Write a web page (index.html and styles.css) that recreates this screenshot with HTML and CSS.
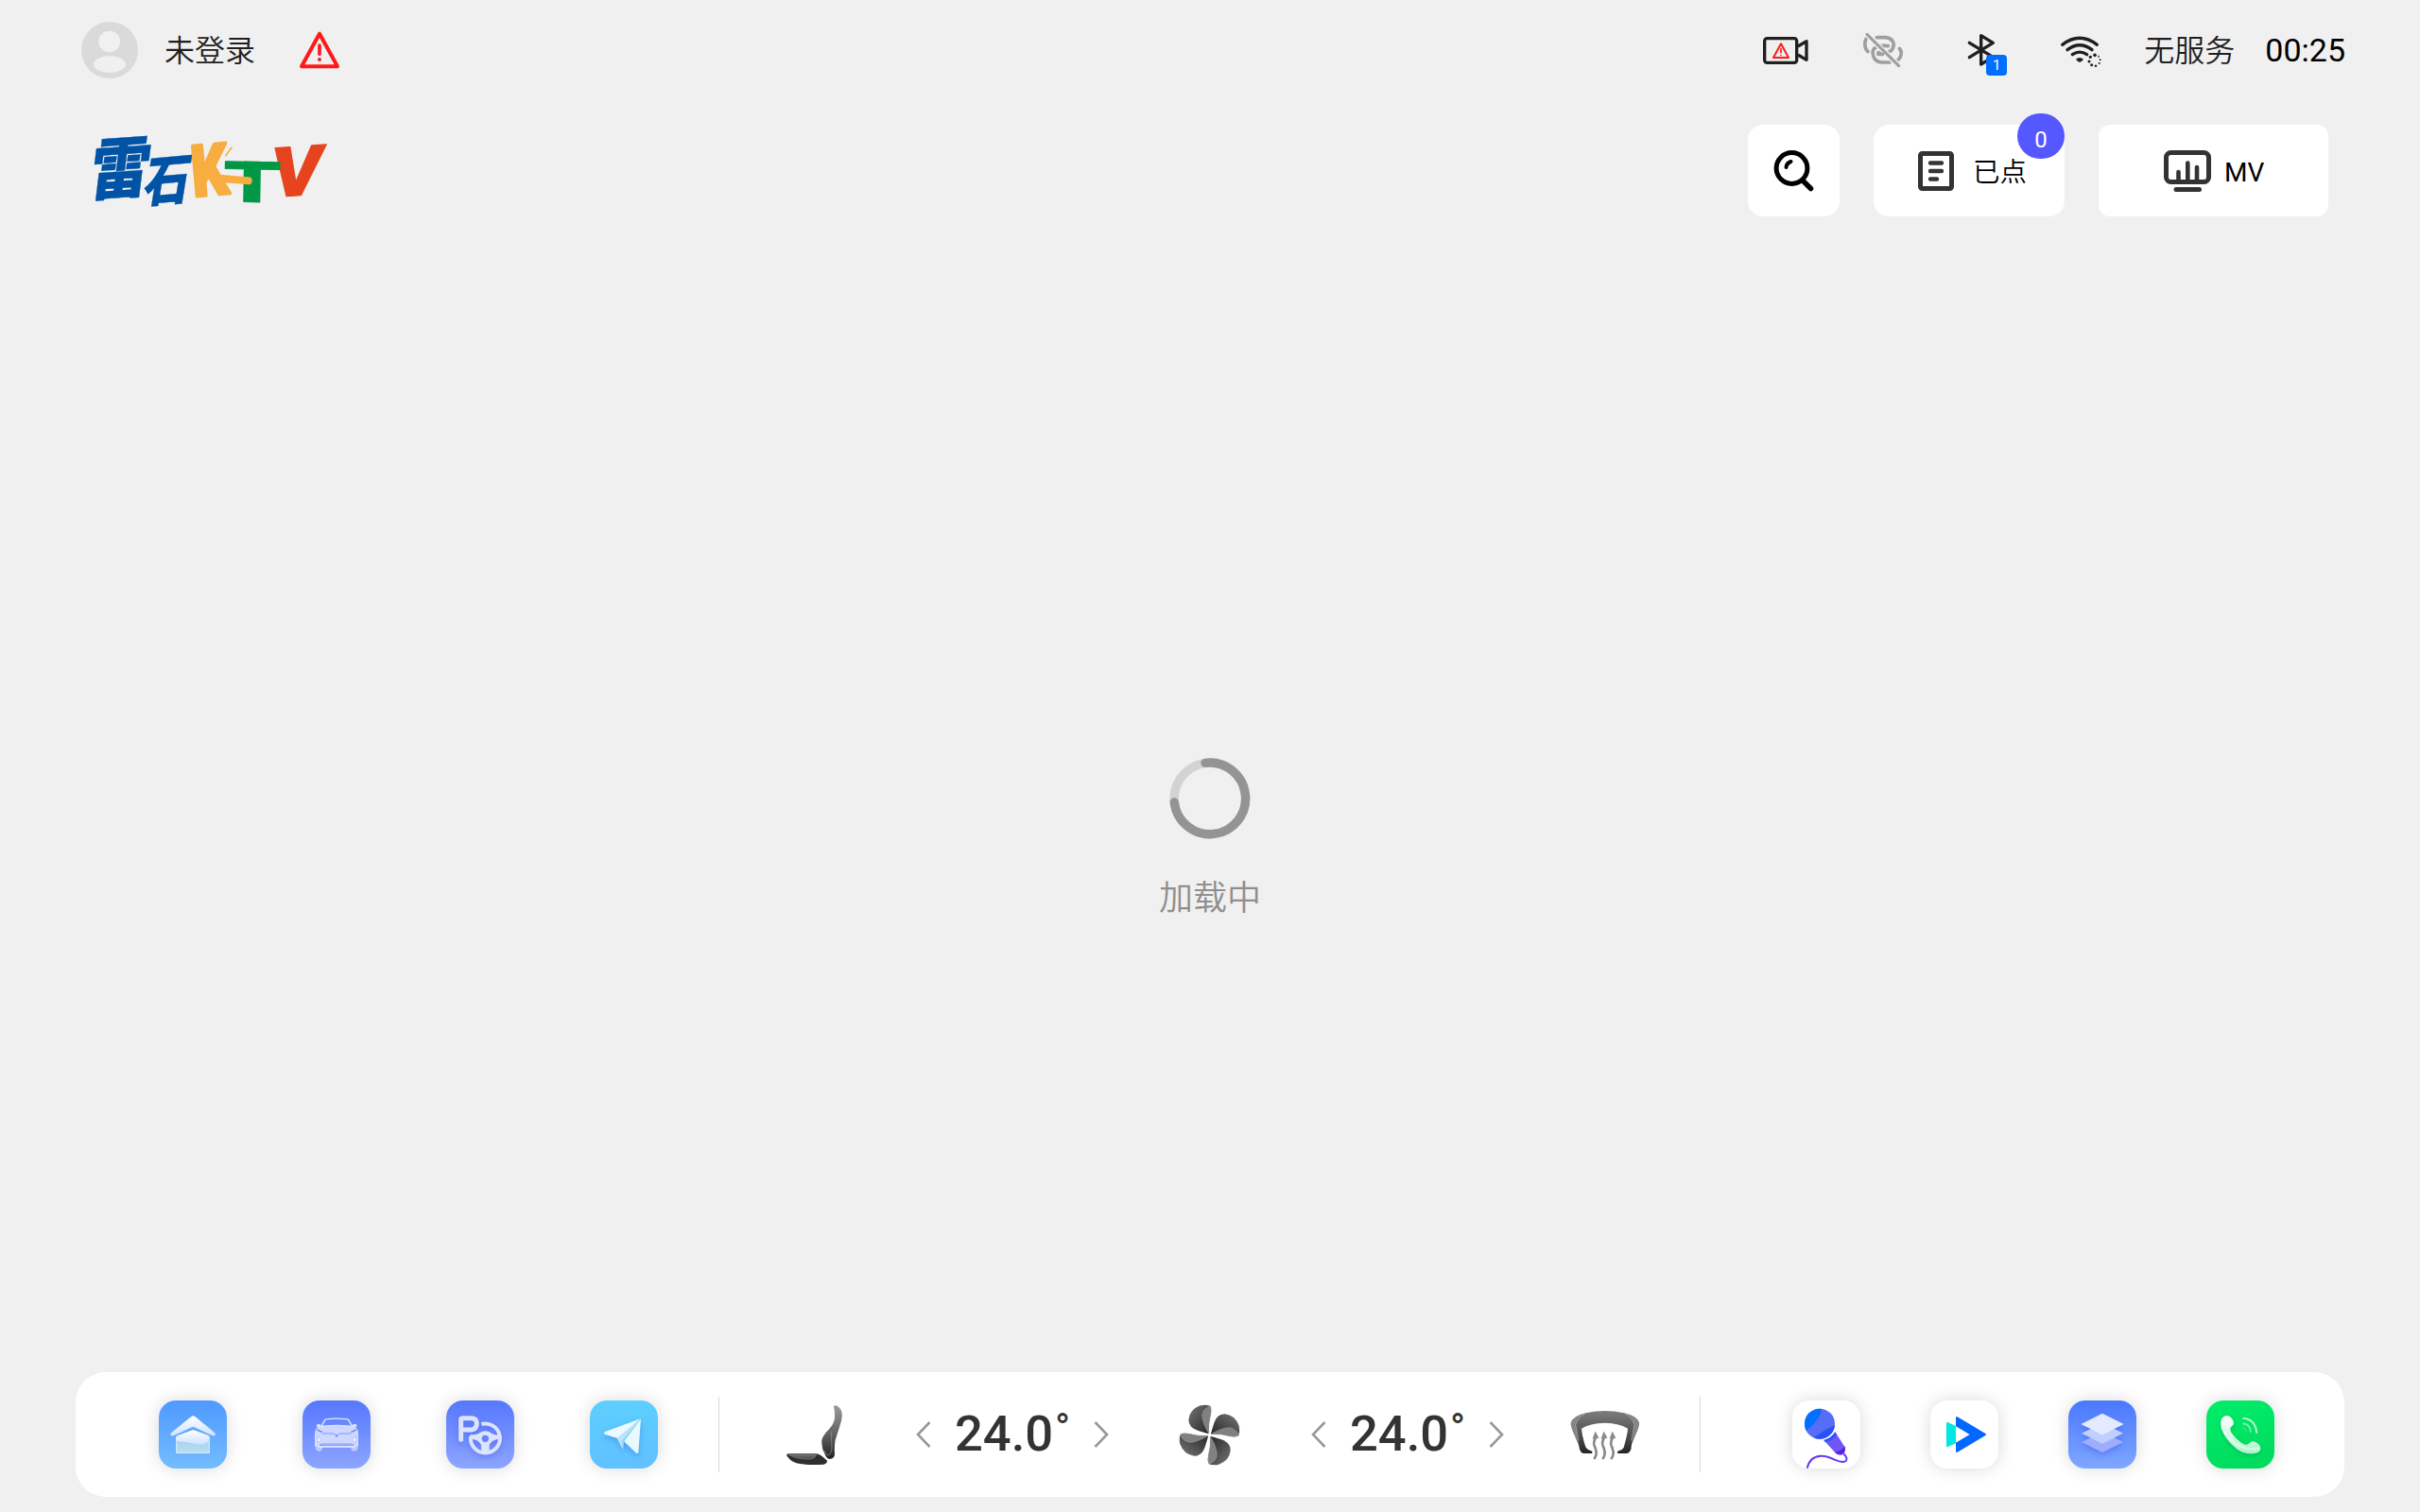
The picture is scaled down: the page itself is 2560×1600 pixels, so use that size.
FILE: index.html
```html
<!DOCTYPE html>
<html lang="zh-CN">
<head>
<meta charset="utf-8">
<title>雷石KTV</title>
<link rel="stylesheet" href="styles.css">
</head>
<body>
<div class="screen">
  <header class="status">
    <div class="account">
      <svg class="avatar" viewBox="78 69 180 180">
        <circle cx="168" cy="159" r="90" fill="#dadada"/>
        <circle cx="167" cy="132" r="34" fill="#f0f0f0"/>
        <ellipse cx="168" cy="204" rx="51" ry="27" fill="#f0f0f0"/>
      </svg>
      <span class="account-name">未登录</span>
      <svg class="alert" viewBox="768 96 132 126" fill="none" stroke="#ff1a1a" stroke-linecap="round" stroke-linejoin="round">
        <path d="M834 107 777 211H891Z" stroke-width="12"/>
        <path d="M834 144V172" stroke-width="11"/>
        <circle cx="834" cy="189" r="6" fill="#ff1a1a" stroke="none"/>
      </svg>
    </div>
    <div class="indicators">
      <svg class="indicator" viewBox="-12 39 312 180" fill="none" stroke="#1f1f1f" stroke-width="10" stroke-linejoin="round">
        <rect x="80" y="92" width="102" height="77" rx="8"/>
        <path d="M186 117 213 101V160L186 144"/>
        <g stroke="#ff1a1a"><path d="M132 109 108 153H156Z" stroke-width="6"/><path d="M132 123V139M132 143V147" stroke-width="5"/></g>
      </svg>
      <svg class="indicator" viewBox="300 39 312 180" fill="none" stroke="#9f9f9f" stroke-width="11" stroke-linecap="round">
        <path d="M403 92Q397 101 399 115Q400 127 408 134"/>
        <path d="M436 89H464Q489 92 490 112Q487 135 466 137H441" />
        <path d="M459 115H448Q424 119 423 136Q424 165 451 168H477"/>
        <path d="M508 124Q516 132 513 145Q511 154 503 161"/>
        <path d="M405 79 507 180" stroke="#f0f0f0" stroke-width="18" stroke-linecap="butt"/>
        <path d="M405 79 506 179" stroke-width="9"/>
        <path d="M460 115 472 116M440 142 455 142"/>
      </svg>
      <span class="indicator bluetooth">
        <svg class="indicator" viewBox="612 39 312 180" fill="none" stroke="#1f1f1f" stroke-width="10" stroke-linecap="round" stroke-linejoin="round">
          <path d="M730 106 805 151 767 174V83L805 106 730 152"/>
        </svg>
        <span class="device-count">1</span>
      </span>
      <svg class="indicator" viewBox="924 39 312 180" fill="none" stroke="#1f1f1f" stroke-width="10" stroke-linecap="round">
        <path d="M1025 112Q1080 70 1135 112"/>
        <path d="M1041 128Q1080 98 1119 128"/>
        <path d="M1057 143Q1080 128 1103 143"/>
        <path d="M1068 158Q1080 148 1092 158Q1089 163 1080 168Q1071 163 1068 158Z" fill="#1f1f1f" stroke="none"/>
        <g fill="#1f1f1f" stroke="none">
          <circle cx="1128" cy="145" r="5.5"/><circle cx="1114" cy="151" r="5"/><circle cx="1110" cy="165" r="4.5"/>
          <circle cx="1118" cy="176" r="4.5"/><circle cx="1131" cy="179" r="3.8"/><circle cx="1142" cy="171" r="3"/>
          <circle cx="1145" cy="160" r="3"/><circle cx="1140" cy="149" r="2.6"/>
        </g>
      </svg>
      <span class="carrier">无服务</span>
      <time class="clock">00:25</time>
    </div>
  </header>

  <section class="toolbar">
    <svg class="logo" viewBox="48 360 888 366" font-weight="900" stroke-linejoin="round" stroke-linecap="round">
      <g class="logo-han" fill="#0053a5" stroke="#0053a5" stroke-width="1">
        <text transform="translate(98 620) rotate(-4) skewX(-11) scale(.96 1.06)" font-size="200">雷</text>
        <text transform="translate(270 642) rotate(-5) skewX(-14) scale(.85 1)" font-size="172">石</text>
      </g>
      <g class="logo-latin">
        <text transform="translate(672 627) rotate(-4) skewX(-12) scale(1.12 1)" font-size="218" fill="#e6441f" stroke="#e6441f" stroke-width="4">V</text>
        <text transform="translate(434 624) rotate(-5) scale(.8 1)" font-size="226" fill="#f7ad40" stroke="#f7ad40" stroke-width="10">K</text>
        <text transform="translate(529 640) rotate(1) scale(1.6 1)" font-size="180" fill="#009844" stroke="#009844" stroke-width="3">T</text>
        <path d="M516 566 608 574" fill="none" stroke="#f7ad40" stroke-width="24"/>
        <path d="M536 494 555 469" fill="none" stroke="#f7ad40" stroke-width="5"/>
      </g>
    </svg>
    <div class="actions">
      <button class="btn btn-search" aria-label="搜索">
        <svg width="44" height="56" viewBox="0 0 44 56" fill="none" stroke="#000" stroke-linecap="round">
          <circle cx="20.5" cy="26" r="16.4" stroke-width="5"/>
          <path d="M33 40 40.500 47.500" stroke-width="5.5"/>
          <path d="M14.500 25Q15 20.500 19.500 19" stroke-width="4"/>
        </svg>
      </button>
      <button class="btn btn-queue">
        <svg width="38" height="42" viewBox="0 0 38 42" fill="none" stroke="#333" stroke-width="5" stroke-linejoin="round" stroke-linecap="round">
          <rect x="2.5" y="2.5" width="33" height="37" rx="2"/>
          <path d="M13 12.500H25M13 21H25M13 29.500H20" stroke-width="4.4"/>
        </svg>
        <span class="label label-queue">已点</span>
        <span class="queue-count">0</span>
      </button>
      <button class="btn btn-mv">
        <svg width="50" height="44" viewBox="0 0 50 44" fill="none" stroke="#333" stroke-width="5" stroke-linecap="round">
          <rect x="2.5" y="2.5" width="45" height="31" rx="5"/>
          <path d="M13 41.500H37.500"/>
          <path d="M15.500 33V23M25.300 33V13.500M35 33V18" stroke-width="4.6"/>
        </svg>
        <span class="label">MV</span>
      </button>
    </div>
  </section>

  <main class="loading">
    <svg width="88" height="88" viewBox="0 0 88 88" fill="none" stroke-width="9.4" stroke-linecap="round">
      <circle cx="44" cy="44" r="37.8" stroke="#d3d3d3"/>
      <path d="M39 6.400A37.800 37.800 0 1 1 6.200 48" stroke="#949494"/>
    </svg>
    <p class="loading-text">加载中</p>
  </main>

  <nav class="dock">
    <div class="apps apps-left">
      <svg class="app app-home" viewBox="294 126 216 216">
        <defs>
          <linearGradient id="roof" x2="0" y2="1"><stop stop-color="#fff"/><stop offset="1" stop-color="#cfe1ff"/></linearGradient>
          <linearGradient id="wall" x2="0" y2="1"><stop stop-color="#98c9ee"/><stop offset="1" stop-color="#b9dff3"/></linearGradient>
        </defs>
        <path d="M397 177Q403 173 409 177L471 228Q476 233 472 237Q468 239 463 237L410 212Q403 208 396 212L342 237Q336 239 332 237Q328 233 334 228Z" fill="url(#roof)"/>
        <path d="M348 242 403 220 456 242V294H348Z" fill="url(#wall)"/>
        <path d="M348 242Q350 237 356 236L397 221Q403 218 409 221L450 236Q456 239 456 246Q449 270 414 265Q380 256 348 255Z" fill="url(#roof)"/>
        <path d="M350 258V292H454V252" fill="none" stroke="#d5eef8" stroke-width="3"/>
      </svg>
      <svg class="app app-car" viewBox="750 126 216 216" fill="none" stroke="#e6ebff" stroke-linejoin="round">
        <path d="M810 209 821 188Q824 185 830 185Q858 182 887 185Q894 185 896 188L908 209" stroke-width="4"/>
        <path d="M796 203 806 202 808 209 797 210ZM921 203 911 202 909 209 920 210Z" fill="#dfe5ff" stroke-width="2"/>
        <path d="M806 208Q858 201 911 208Q925 214 925 230V271H791V230Q792 214 806 208Z" fill="#cdd7ff" stroke-width="3"/>
        <path d="M792 272H813V280Q812 287 802 287 792 286 792 278ZM904 272H925V280Q924 287 914 287 904 286 904 278Z" fill="#bac8ff" stroke="none"/>
        <path d="M796 217Q800 223 813 226M921 217Q917 223 904 226" stroke="#667fff" stroke-width="4"/>
        <path d="M813 231H849L858 239 868 231H904" stroke="#7088ff" stroke-width="2.5"/>
        <path d="M858 233V243" stroke="#7088ff" stroke-width="4"/>
        <path d="M797 238 808 252 799 260ZM920 238 909 252 918 260Z" fill="#fff" stroke="#8ba0ff" stroke-width="1.5"/>
        <path d="M804 269Q809 262 819 264H898Q909 262 913 269Z" stroke="#7b92ff" stroke-width="3"/>
        <path d="M801 273H917" stroke-width="4"/>
      </svg>
      <svg class="app app-parking" viewBox="96 126 216 216">
        <g class="glyph-shadow" fill="none" stroke="#dce3ff">
          <path d="M143 250V187Q143 182 149 182H177Q193 183 193 200Q192 217 177 219H152" stroke-width="15" stroke-linecap="round"/>
          <path d="M208 201A46.500 46.500 0 1 1 174 240" stroke-width="12"/>
          <path fill-rule="evenodd" d="M172 234Q194 236 203 228Q220 217 237 228Q246 236 268 236V248Q240 249 233 268V292H207V268Q200 249 172 248ZM220 236A11 11 0 1 0 220 258A11 11 0 1 0 220 236Z" fill="#dce3ff" stroke="none"/>
        </g>
      </svg>
      <svg class="app app-nav" viewBox="552 126 216 216">
        <g class="glyph-shadow">
          <path d="M712 184 642 247 599 233Q595 230 599 226Z" fill="#eef9ff"/>
          <path d="M712 184 638 246 656 282 661 255Z" fill="#b5e5f9"/>
          <path d="M714 184 660 256 699 293Q704 295 706 290Z" fill="#eaf8ff"/>
          <path d="M712 184 661 255 656 282 654 254Z" fill="#8dd4f2"/>
        </g>
      </svg>
    </div>

    <div class="climate">
      <svg class="seat" viewBox="93 75 183 195">
        <defs>
          <linearGradient id="seatback" x2="0" y2="1"><stop stop-color="#9a9a9a"/><stop offset=".55" stop-color="#606060"/><stop offset="1" stop-color="#222"/></linearGradient>
          <linearGradient id="cushion" x2="0" y2="1"><stop stop-color="#777"/><stop offset="1" stop-color="#444"/></linearGradient>
        </defs>
        <path d="M246 82Q248 76 257 80Q270 87 272 104Q274 120 265 145L251 188Q247 211 249 234Q248 248 233 249Q223 247 218 234Q206 213 208 190Q210 175 232 153Q246 137 249 119Q250 103 246 82Z" fill="url(#seatback)"/>
        <path d="M239 161Q238 186 240 212Q239 231 230 236Q219 236 217 223" fill="none" stroke="#999" stroke-width="2"/>
        <path d="M96 236Q98 230 106 232H191Q203 233 225 254Q226 262 214 266Q160 270 128 262Q104 253 96 236Z" fill="#2e2e2e"/>
        <path d="M101 234H192Q186 247 173 249Q132 251 101 234Z" fill="url(#cushion)"/>
        <path d="M101 234Q132 251 173 249Q186 247 192 234" fill="none" stroke="#999" stroke-width="1.5"/>
      </svg>
      <div class="zone">
        <svg class="chev" viewBox="0 0 16 30"><path d="M14.500 2 2 15 14.500 28"/></svg>
        <span class="temp">24.0<sup>°</sup></span>
        <svg class="chev" viewBox="0 0 16 30"><path d="M1.500 2 14 15 1.500 28"/></svg>
      </div>
      <svg class="fan" viewBox="141 75 195 195">
        <defs>
          <linearGradient id="blade" x1="0" y1="0" x2="1" y2="1"><stop stop-color="#777"/><stop offset="1" stop-color="#222"/></linearGradient>
          <g id="vane">
            <path d="M234 168Q226 166 203 159Q171 149 172 124Q175 92 209 79Q226 75 240 80Q246 88 242 108Q234 140 236 168Z" fill="url(#blade)"/>
            <path d="M236 168Q216 135 215 109Q218 89 240 80Q246 88 242 108Q234 140 236 168Z" fill="#808080" stroke="#a5a5a5" stroke-width="1.5"/>
          </g>
        </defs>
        <use href="#vane"/><use href="#vane" transform="rotate(90 238.500 172.500)"/><use href="#vane" transform="rotate(180 238.500 172.500)"/><use href="#vane" transform="rotate(270 238.500 172.500)"/>
      </svg>
      <div class="zone">
        <svg class="chev" viewBox="0 0 16 30"><path d="M14.500 2 2 15 14.500 28"/></svg>
        <span class="temp">24.0<sup>°</sup></span>
        <svg class="chev" viewBox="0 0 16 30"><path d="M1.500 2 14 15 1.500 28"/></svg>
      </div>
      <svg class="defrost" viewBox="183 93 222 159">
        <defs><linearGradient id="glass" x2="0" y2="1"><stop stop-color="#7d7d7d"/><stop offset=".5" stop-color="#555"/><stop offset="1" stop-color="#242424"/></linearGradient></defs>
        <path d="M232 103Q192 112 185 133Q184 143 189 155L216 220 228 200 212 140ZM355 103Q396 112 402 133Q403 143 398 155L371 220 359 200 375 140Z" fill="#858585"/>
        <path d="M232 103Q293 89 355 103Q380 117 386 140L376 218Q371 230 362 231H334Q331 224 337 223Q349 220 353 212Q365 170 366 152Q340 135 293 134Q245 135 219 152Q222 185 233 212Q239 220 249 223Q256 225 252 231H225Q216 228 213 218L201 140Q207 117 232 103Z" fill="url(#glass)"/>
        <path d="M232 103Q206 119 200 139L211 190M355 103Q381 119 387 139L376 190" fill="none" stroke="#aaa" stroke-width="2"/>
        <g fill="none" stroke="#898989" stroke-width="8">
          <path id="heat" d="M259 249Q267 239 266 227Q264 215 259 204Q257 193 264 180"/>
          <use href="#heat" x="27"/><use href="#heat" x="54"/>
        </g>
        <path d="M263 163 273 182 255 184ZM290 163 300 182 282 184ZM317 163 327 182 309 184Z" fill="#898989" stroke="#898989" stroke-width="2" stroke-linejoin="round"/>
      </svg>
    </div>

    <div class="apps apps-right">
      <svg class="app app-white" viewBox="108 126 216 216">
        <defs>
          <clipPath id="ball"><circle cx="195" cy="200" r="48"/></clipPath>
          <linearGradient id="handle" x2="1" y2="1"><stop stop-color="#5b5cff"/><stop offset="1" stop-color="#8050f5"/></linearGradient>
        </defs>
        <g clip-path="url(#ball)">
          <path d="M140 145H250V255H140Z" fill="#566df8"/>
          <path d="M140 145H201Q204 180 152 222L140 225Z" fill="#0070ff"/>
          <path d="M250 201Q210 218 172 247L250 260Z" fill="#2a50f8"/>
        </g>
        <path d="M208 252Q233 245 244 226L276 276Q277 293 264 298Q252 300 244 292Z" fill="url(#handle)"/>
        <path d="M208 252Q233 245 244 226L248 233Q235 253 213 259Z" fill="#2a50f8"/>
        <path d="M243 290Q266 285 275 271Q279 291 265 298 252 301 243 290Z" fill="#5526e8"/>
        <path d="M155 341Q163 304 198 302Q218 301 242 314Q270 326 279 317Q285 309 270 294" fill="none" stroke="#6638f0" stroke-width="6"/>
      </svg>
      <svg class="app app-white" viewBox="546 126 216 216">
        <path d="M600 194 627 207V262L600 274Q597 274 597 270V197Q597 194 600 194Z" fill="#00e8e3"/>
        <path d="M627 181Q627 176 632 178L721 231Q725 234 721 237L632 290Q627 292 627 287V260L671 234 627 208Z" fill="#0067ff"/>
      </svg>
      <svg class="app app-layers" viewBox="54 126 216 216">
        <g class="glyph-shadow">
          <path d="M96 258 162 225 228 258 162 291Z" fill="#a0adff"/>
          <path d="M96 230 162 197 228 230 162 263Z" fill="#c1cfff"/>
          <path d="M96 201 162 168 228 201 162 234Z" fill="#e4eaff" stroke="#f4f6ff" stroke-width="1.500"/>
        </g>
      </svg>
      <svg class="app app-phone" viewBox="492 126 216 216">
        <defs><linearGradient id="handset" x2="0" y2="1"><stop stop-color="#fff"/><stop offset="1" stop-color="#aaf5c9"/></linearGradient></defs>
        <g class="glyph-shadow">
          <path d="M541 183Q552 169 566 177Q577 184 579 198Q578 206 570 211Q564 220 576 234Q596 259 614 266Q624 268 630 260Q638 252 652 260Q664 267 664 280Q663 290 649 293Q620 300 590 281Q554 253 541 219Q534 198 541 183Z" fill="url(#handset)"/>
          <path d="M541 209Q561 252 594 269Q625 285 662 278" fill="none" stroke="#e9fff1" stroke-width="4"/>
        </g>
        <path d="M607 182Q648 184 652 230" fill="none" stroke="#b5fad0" stroke-width="6"/>
        <path d="M607 199Q631 200 633 227" fill="none" stroke="#72efa4" stroke-width="6"/>
        <path d="M606 213Q618 214 619 227" fill="none" stroke="#27e477" stroke-width="6"/>
      </svg>
    </div>
  </nav>
</div>
</body>
</html>
```
FILE: styles.css
```css
* { box-sizing: border-box; }
body {
  margin: 0;
  background: #f0f0f0;
  font-family: Roboto, "Noto Sans CJK SC", sans-serif;
  color: #1f1f1f;
}
svg { display: block; flex: none; }
.screen {
  width: 2560px;
  height: 1600px;
  display: flex;
  flex-direction: column;
  overflow: hidden;
}

/* status bar */
.status {
  height: 106px;
  padding: 0 79px 0 86px;
  display: flex;
  align-items: center;
  justify-content: space-between;
}
.account, .indicators { display: flex; align-items: center; }
.avatar { width: 60px; height: 60px; }
.account-name { margin: 0 46px 0 28px; }
.account-name, .carrier {
  font-size: 32px;
  line-height: 48px;
  font-weight: 350;
  padding-top: 2px;
}
.alert { width: 44px; height: 42px; }
.indicator { width: 104px; height: 60px; }
.bluetooth { position: relative; }
.device-count {
  position: absolute;
  left: 57px;
  top: 35px;
  width: 22px;
  height: 22px;
  border-radius: 4px;
  background: #006eff;
  color: #fff;
  font-size: 15px;
  line-height: 22px;
  text-align: center;
}
.carrier { margin: 0 32px 0 16px; }
.clock { font-size: 34px; line-height: 48px; color: #000; }

/* title row */
.toolbar {
  height: 149px;
  padding: 26px 97px 0 76px;
  display: flex;
  justify-content: space-between;
  align-items: flex-start;
}
.logo { width: 296px; height: 122px; margin-top: -12px; }
.logo-han { font-family: "Noto Sans CJK SC", sans-serif; }
.logo-latin { font-family: Roboto, sans-serif; }
.actions { display: flex; gap: 36px; }
.btn {
  height: 97px;
  border: 0;
  padding: 0;
  border-radius: 16px;
  background: #fff;
  color: #000;
  font: 400 28px/40px Roboto, "Noto Sans CJK SC", sans-serif;
  display: flex;
  align-items: center;
}
.label { padding-top: 4px; }
.label-queue { font-size: 28.5px; font-weight: 350; }
.btn-search { width: 97px; padding: 0 2px 2px 0; justify-content: center; }
.btn-queue { width: 202px; position: relative; padding-left: 47px; gap: 20px; }
.btn-mv { width: 243px; padding-left: 69px; gap: 14px; border-radius: 12px; }
.queue-count {
  position: absolute;
  left: 152px;
  top: -12px;
  width: 50px;
  height: 48px;
  border-radius: 24px;
  background: #5558ff;
  color: #fff;
  font-size: 24px;
  line-height: 56px;
  text-align: center;
}

/* loading state */
.loading {
  flex: 1;
  padding-top: 546px;
  display: flex;
  flex-direction: column;
  align-items: center;
}
.loading-text {
  margin: 35px 0 0;
  font-size: 36px;
  line-height: 54px;
  font-weight: 350;
  color: #8f8f8f;
}

/* dock */
.dock {
  width: 2400px;
  height: 132px;
  margin: 0 auto 16px;
  border-radius: 32px;
  background: #fff;
  display: flex;
  align-items: center;
}
.apps { display: flex; align-items: center; }
.apps-left { gap: 80px; padding-left: 88px; width: 680px; }
.apps-right { gap: 74px; padding-left: 97px; }
.app {
  width: 72px;
  height: 72px;
  border-radius: 18px;
  box-shadow: 0 0 18px rgba(0, 0, 0, .15);
}
.app-home { background: linear-gradient(#4f99ff, #73bcff); }
.app-car { background: linear-gradient(#5577ff, #8da6ff); }
.app-parking { background: linear-gradient(#5577ff, #8da6ff); }
.app-nav { background: linear-gradient(#5ccfff, #60c1ff); }
.app-white { background: #fff; }
.app-layers { background: linear-gradient(#4a78ff, #80a7ff); }
.app-phone { background: linear-gradient(160deg, #00ed6a, #00d95c); }
.glyph-shadow { filter: drop-shadow(0 9px 9px rgba(20, 40, 200, .25)); }
.app-phone .glyph-shadow { filter: drop-shadow(0 6px 6px rgba(0, 130, 60, .3)); }
.climate {
  width: 1039px;
  height: 80px;
  border: solid #d8d8d8;
  border-width: 0 1px;
  padding: 0 63px 0 70px;
  display: flex;
  align-items: center;
}
.seat { width: 61px; height: 65px; margin-right: 77px; }
.fan { width: 65px; height: 65px; margin: 0 75px 0 74px; }
.defrost { width: 74px; height: 53px; margin-left: 70px; }
.zone { width: 204px; display: flex; align-items: center; justify-content: space-between; }
.chev { width: 16px; height: 30px; fill: none; stroke: #989898; stroke-width: 2.6; }
.temp {
  width: 122px;
  padding-bottom: 2px;
  font-size: 52.5px;
  line-height: 64px;
  font-weight: 500;
  color: #333;
  white-space: nowrap;
  display: flex;
}
.temp sup { font-size: 42px; line-height: 53px; margin-left: 2px; }
```
